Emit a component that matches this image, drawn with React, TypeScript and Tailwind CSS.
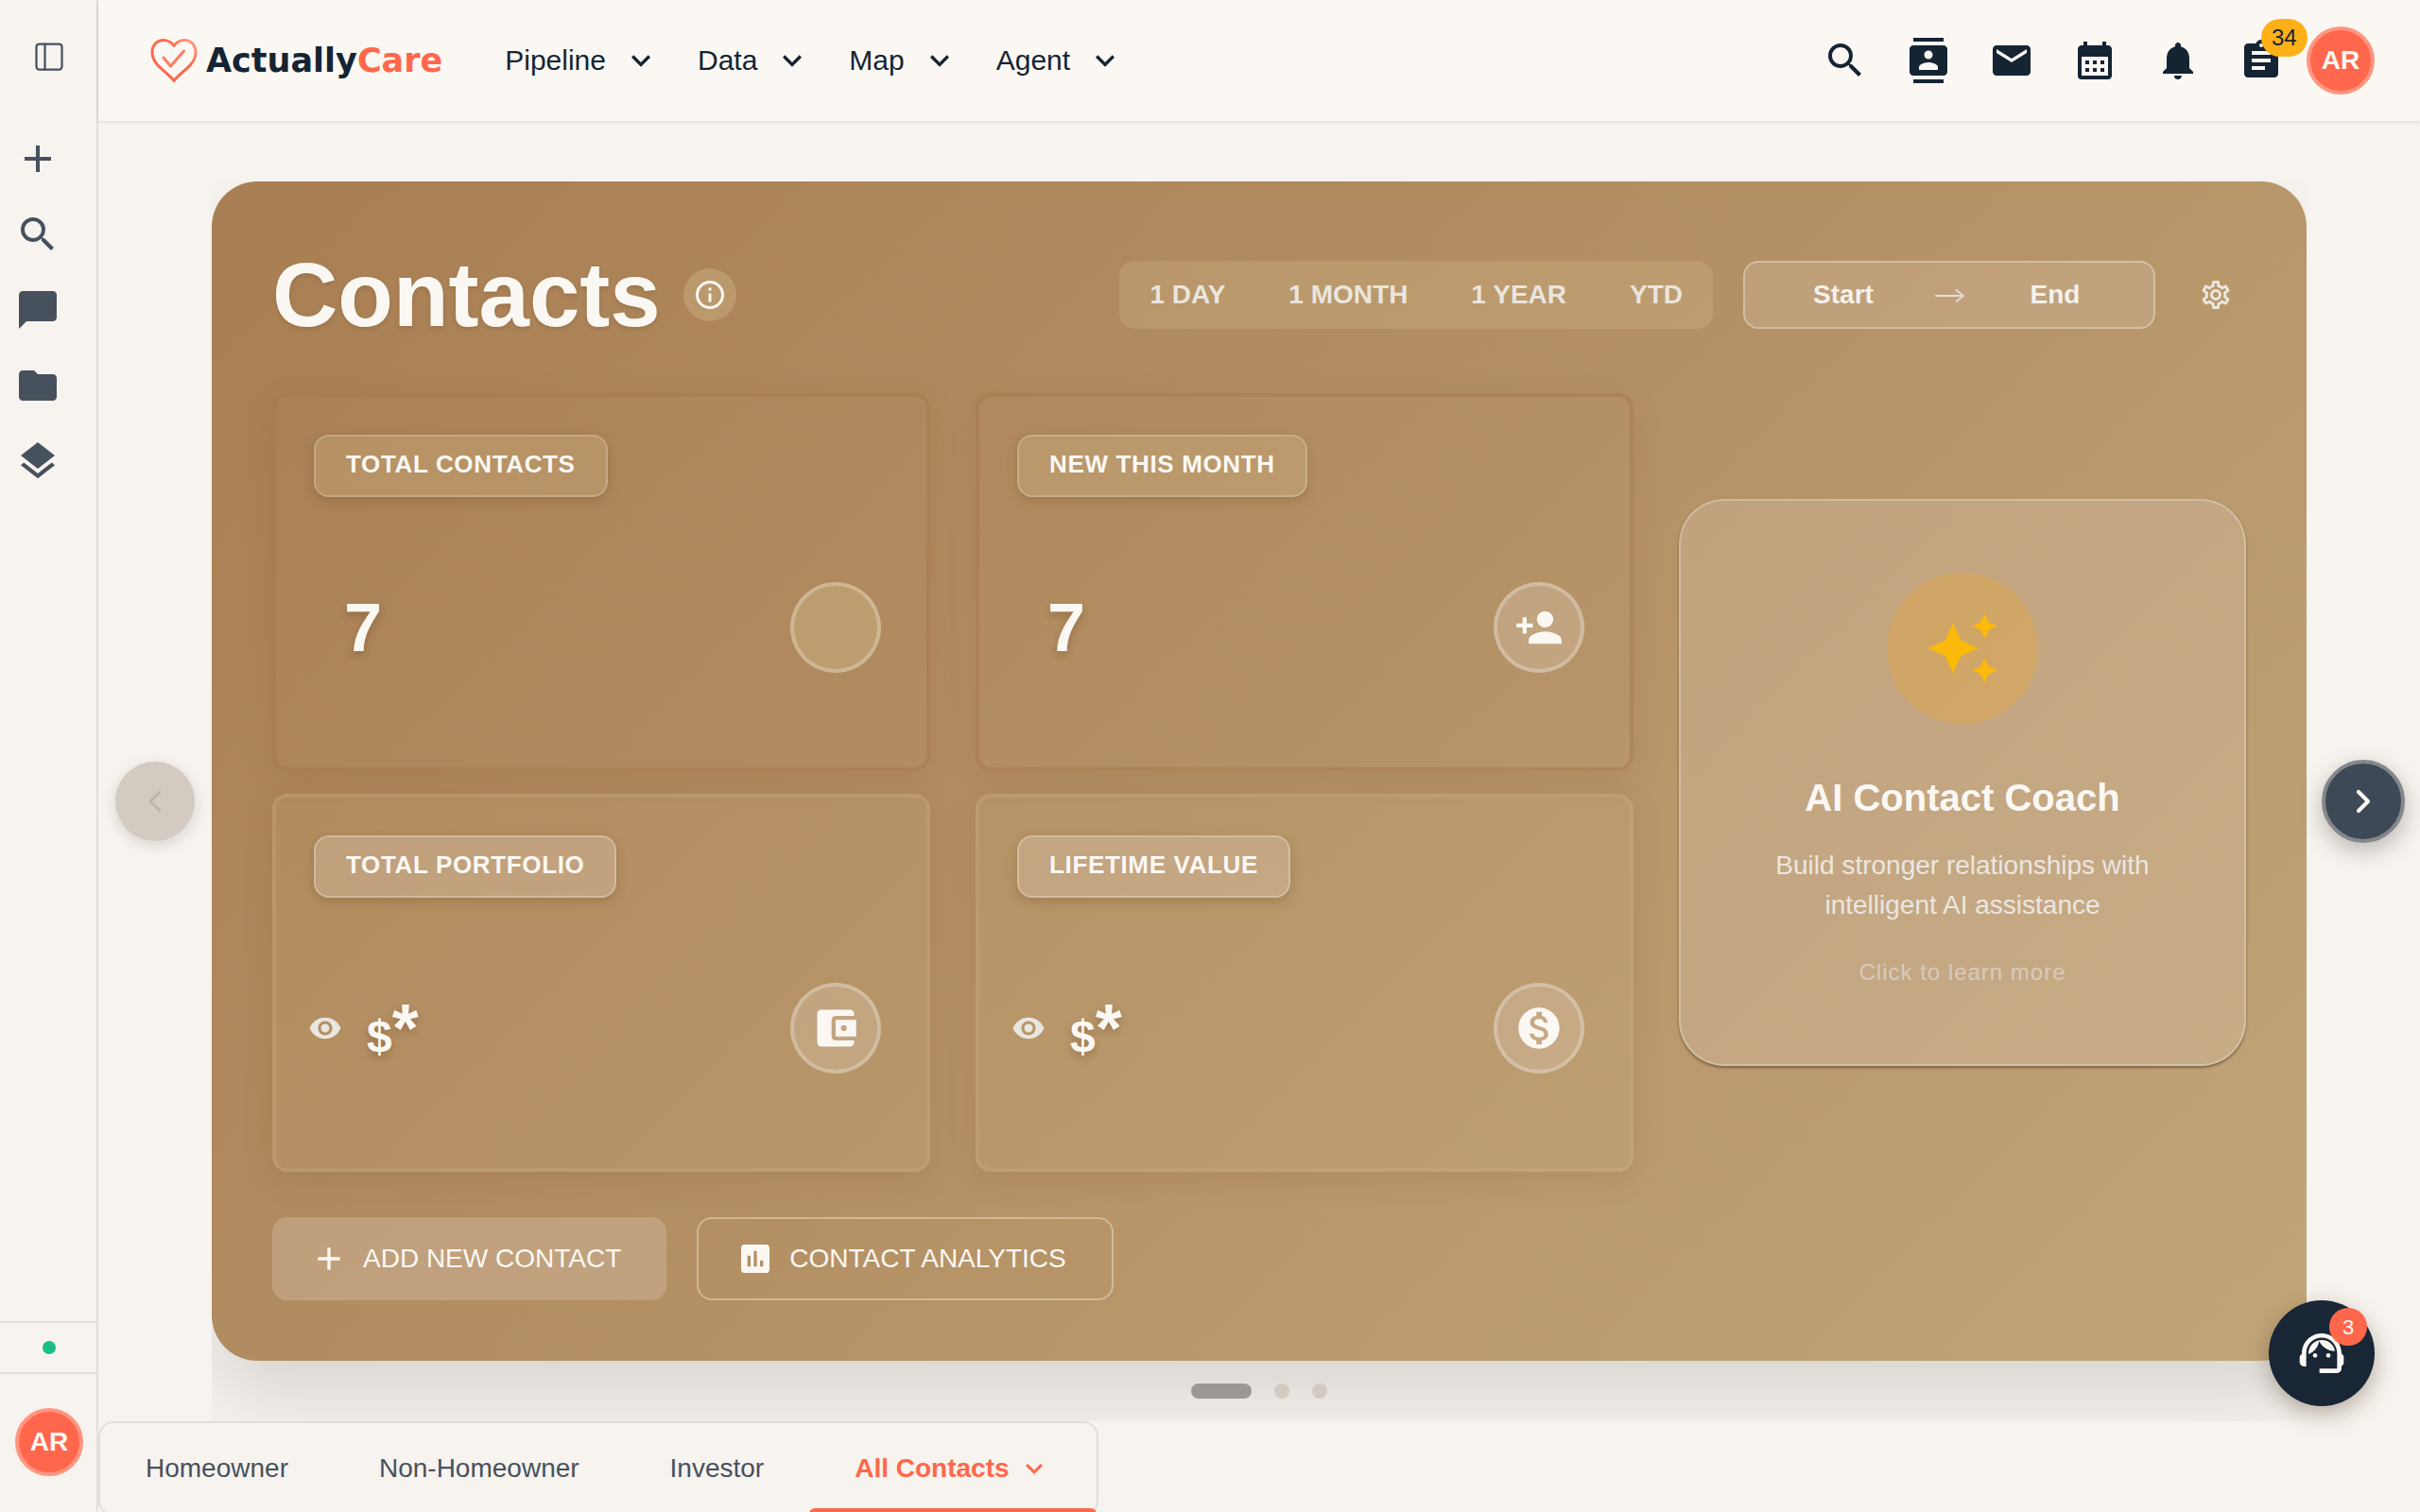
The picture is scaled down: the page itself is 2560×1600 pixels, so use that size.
import type { ReactNode } from "react";
import { ChevronLeft, ChevronRight, PanelLeft } from "lucide-react";
import {
  MdAccountBalanceWallet,
  MdAdd,
  MdAssessment,
  MdAssignment,
  MdAutoAwesome,
  MdCalendarMonth,
  MdChatBubble,
  MdContacts,
  MdEmail,
  MdFolder,
  MdInfoOutline,
  MdKeyboardArrowDown,
  MdLayers,
  MdMonetizationOn,
  MdNotifications,
  MdOutlineSettings,
  MdPersonAdd,
  MdSearch,
  MdSupportAgent,
  MdVisibility,
} from "react-icons/md";

const sideItems = [
  { label: "Add", icon: MdAdd },
  { label: "Search", icon: MdSearch },
  { label: "Chat", icon: MdChatBubble },
  { label: "Files", icon: MdFolder },
  { label: "Layers", icon: MdLayers },
];

const navItems = ["Pipeline", "Data", "Map", "Agent"];

const headerActions = [
  { label: "Search", icon: MdSearch },
  { label: "Contacts", icon: MdContacts },
  { label: "Email", icon: MdEmail },
  { label: "Calendar", icon: MdCalendarMonth },
  { label: "Notifications", icon: MdNotifications },
  { label: "Tasks", icon: MdAssignment, badge: "34" },
];

const ranges = ["1 DAY", "1 MONTH", "1 YEAR", "YTD"];
const tabs = ["Homeowner", "Non-Homeowner", "Investor"];

function Avatar() {
  return (
    <button
      type="button"
      aria-label="Account"
      className="flex size-18 shrink-0 items-center justify-center rounded-full border-4 border-[#ff9580] bg-[#ff674c] text-[28px] font-bold leading-none text-[#fbf8f3]"
    >
      AR
    </button>
  );
}

function Logo() {
  return (
    <a href="#home" className="flex items-center gap-1.5" aria-label="ActuallyCare">
      <svg viewBox="0 0 56 56" className="size-14" fill="none" strokeLinecap="round" strokeLinejoin="round">
        <defs>
          <linearGradient id="heart" x1="0" y1="1" x2="1" y2="0">
            <stop offset="0.6" stopColor="#ff674c" />
            <stop offset="1" stopColor="#ff9f8c" />
          </linearGradient>
        </defs>
        <path
          d="M28 49.5C21 40 5 33 5 19.5C5 11.500 10 6.500 17 6.500C21.500 6.500 25.500 9 28 12.500C30.500 9 34.500 6.500 39 6.500C46 6.500 51 11.500 51 19.500C51 33 35 40 28 49.500Z"
          stroke="url(#heart)"
          strokeWidth="3"
        />
        <path d="M17 25L24.500 34L38.500 18" stroke="#ff7a62" strokeWidth="3" />
      </svg>
      <span className="font-['DejaVu_Sans'] text-[35px] font-bold leading-none text-[#152433]">
        Actually<span className="text-[#ff674c]">Care</span>
      </span>
    </a>
  );
}

function Sidebar() {
  return (
    <aside className="flex w-26 shrink-0 flex-col border-r-2 border-[#e2dfda] pl-0.5 text-[#47515e]">
      <button type="button" aria-label="Toggle sidebar" className="mt-9 flex h-12 items-center justify-center">
        <PanelLeft size={36} strokeWidth={1.5} />
      </button>
      <nav className="mt-15 flex flex-1 flex-col gap-8 pl-3.5">
        {sideItems.map(({ label, icon: Icon }) => (
          <button key={label} type="button" aria-label={label} className="size-12">
            <Icon size={48} />
          </button>
        ))}
      </nav>
      <div className="-ml-0.5 flex h-14 items-center justify-center border-y-2 border-[#e2dfda] pl-0.5">
        <span className="size-3.5 rounded-full bg-[#1bbd85]" />
      </div>
      <div className="flex justify-center pb-[38px] pt-9">
        <Avatar />
      </div>
    </aside>
  );
}

function Header() {
  return (
    <header className="relative z-10 flex h-32 shrink-0 items-center justify-between bg-[#fbf8f3] pl-13 pr-12 text-[#152433] shadow-[0_1px_4px_rgba(0,0,0,0.12)]">
      <div className="flex items-center gap-[66px]">
        <Logo />
        <nav className="flex items-center gap-10">
          {navItems.map((item) => (
            <button key={item} type="button" className="flex items-center gap-[17px] text-[30px] leading-10">
              {item}
              <MdKeyboardArrowDown size={40} />
            </button>
          ))}
        </nav>
      </div>
      <div className="flex items-center gap-2">
        {headerActions.map(({ label, icon: Icon, badge }) => (
          <button key={label} type="button" aria-label={label} className="relative flex size-20 items-center justify-center">
            <Icon size={48} />
            {badge && (
              <span className="absolute -top-1 left-10 flex h-10 items-center justify-center rounded-full bg-[#fdb017] px-[11px] text-2xl">
                {badge}
              </span>
            )}
          </button>
        ))}
        <Avatar />
      </div>
    </header>
  );
}

function StatCard({
  label,
  value,
  icon,
  tone,
}: {
  label: string;
  value?: string;
  icon?: ReactNode;
  tone: "dark" | "light";
}) {
  return (
    <section
      className={
        tone === "dark"
          ? "flex h-100 flex-col items-start rounded-2xl border-4 border-[#a4784a]/50 p-10 shadow-[0_8px_32px_rgba(120,70,30,0.12)]"
          : "flex h-100 flex-col items-start rounded-2xl border-4 border-[#d0b487]/25 bg-[#d8c090]/10 p-10 shadow-[0_8px_32px_rgba(120,70,30,0.14)]"
      }
    >
      <h2
        className={
          tone === "dark"
            ? "rounded-2xl border-2 border-white/20 bg-[#d8c090]/25 px-8 pb-4 pt-3 text-[26px] font-bold leading-[34px] tracking-wide text-[#fbf8f3] shadow-[0_4px_12px_rgba(100,60,20,0.25)]"
            : "rounded-2xl border-2 border-white/25 bg-[#d8bfa8]/40 px-8 pb-4 pt-3 text-[26px] font-bold leading-[34px] tracking-wide text-[#fbf8f3] shadow-[0_4px_12px_rgba(100,60,20,0.25)]"
        }
      >
        {label}
      </h2>
      <div className="mt-[30px] flex w-full flex-1 items-center justify-between pr-2 text-[#fbf8f3]">
        {value ? (
          <p className="pl-8 text-7xl font-bold leading-none [text-shadow:0_4px_8px_rgba(90,50,20,0.3)]">{value}</p>
        ) : (
          <div className="flex items-center gap-5">
            <button type="button" aria-label={`Show ${label}`} className="-ml-3 flex size-12 items-center justify-center text-[#e9e5df]">
              <MdVisibility size={36} />
            </button>
            <p className="flex items-baseline text-7xl font-bold leading-none [text-shadow:0_4px_8px_rgba(90,50,20,0.3)]">
              <span className="text-5xl leading-none">$</span>
              <span>*</span>
            </p>
          </div>
        )}
        <span
          className={
            tone === "dark" && !icon
              ? "flex size-24 items-center justify-center rounded-full border-4 border-white/25 bg-[#d8c090]/35"
              : "flex size-24 items-center justify-center rounded-full border-4 border-white/25 bg-[#d8bfa8]/40"
          }
        >
          {icon}
        </span>
      </div>
    </section>
  );
}

function DateField({ label }: { label: string }) {
  return (
    <input
      aria-label={label}
      placeholder={label}
      className="w-45 bg-transparent text-center text-[28px] font-bold text-[#f5f1ec] outline-none placeholder:text-[#f5f1ec] placeholder:opacity-100"
    />
  );
}

function ContactsPanel() {
  return (
    <div className="rounded-[48px] bg-linear-135 from-[#a87e52] via-[#b49165] to-[#c2a679] p-16 shadow-[0_40px_80px_rgba(0,0,0,0.12)]">
      <div className="flex h-28 items-center justify-between">
        <div className="flex items-center gap-6">
          <h1 className="text-8xl font-bold leading-[112px] text-[#fbf8f3] [text-shadow:0_2px_4px_rgba(90,50,20,0.2)]">Contacts</h1>
          <button type="button" aria-label="Info" className="flex size-14 items-center justify-center rounded-full bg-[#d8c090]/35 text-[#fbf8f3]">
            <MdInfoOutline size={36} />
          </button>
        </div>
        <div className="flex items-center gap-8">
          <div className="flex h-18 items-center gap-[3px] rounded-2xl bg-[#d8c090]/25">
            {ranges.map((range) => (
              <button key={range} type="button" className="h-full px-8 text-[28px] font-bold text-[#eae5de]">
                {range}
              </button>
            ))}
          </div>
          <div className="flex h-18 items-center rounded-2xl border-2 border-white/30 bg-[#d8bfa8]/30 px-3.5">
            <DateField label="Start" />
            <svg viewBox="0 0 44 32" className="h-8 w-11" fill="none" stroke="#e3dcd4" strokeWidth="2">
              <path d="M7 17H37M29 10.500L37 17L29 23.500" />
            </svg>
            <DateField label="End" />
          </div>
          <button type="button" aria-label="Settings" className="flex size-16 items-center justify-center text-[#eae5de]">
            <MdOutlineSettings size={36} />
          </button>
        </div>
      </div>

      <div className="mt-12 flex items-center gap-12">
        <div className="grid flex-1 grid-cols-2 gap-x-12 gap-y-6">
          <StatCard label="TOTAL CONTACTS" value="7" tone="dark" />
          <StatCard label="NEW THIS MONTH" value="7" tone="dark" icon={<MdPersonAdd size={52} />} />
          <StatCard label="TOTAL PORTFOLIO" tone="light" icon={<MdAccountBalanceWallet size={52} />} />
          <StatCard label="LIFETIME VALUE" tone="light" icon={<MdMonetizationOn size={52} />} />
        </div>
        <button
          type="button"
          className="flex size-150 flex-col items-center justify-center rounded-[48px] border-2 border-white/25 bg-[#d8bfa8]/35 pb-1.5 shadow-[0_2px_3px_rgba(60,40,20,0.5)]"
        >
          <span className="flex size-40 items-center justify-center rounded-full bg-[#f8a91c]/25 text-[#fbb90b]">
            <MdAutoAwesome size={80} />
          </span>
          <span className="mt-[54px] text-[40px] font-bold leading-12 text-[#fbf8f3]">AI Contact Coach</span>
          <span className="mt-[27px] w-110 text-[28px] leading-[42px] text-[#ebe6e0]">
            Build stronger relationships with intelligent AI assistance
          </span>
          <span className="mt-[34px] text-2xl leading-8 tracking-[1px] text-[#d8cbbd]">Click to learn more</span>
        </button>
      </div>

      <div className="mt-12 flex gap-8 text-[28px] text-[#fbf8f3]">
        <button type="button" className="flex h-22 items-center gap-4 rounded-2xl bg-[#d8bfa8]/40 pl-10 pr-12">
          <MdAdd size={40} />
          ADD NEW CONTACT
        </button>
        <button type="button" className="flex h-22 items-center gap-4 rounded-2xl border-2 border-white/35 pl-10 pr-12">
          <MdAssessment size={40} />
          CONTACT ANALYTICS
        </button>
      </div>
    </div>
  );
}

export default function App() {
  return (
    <div className="flex h-screen overflow-hidden bg-[#f7f3ee] font-['Liberation_Sans',Arial,sans-serif]">
      <Sidebar />
      <div className="flex min-w-0 flex-1 flex-col">
        <Header />
        <main className="pt-16">
          <div className="flex items-center gap-4 px-4">
            <button
              type="button"
              disabled
              aria-label="Previous"
              className="mx-0.5 flex size-21 shrink-0 items-center justify-center rounded-full bg-[#d3cac2] text-[#bfb2a7] shadow-[0_4px_16px_rgba(0,0,0,0.14)]"
            >
              <ChevronLeft size={40} strokeWidth={1.5} />
            </button>
            <div className="min-w-0 flex-1 overflow-hidden">
              <ContactsPanel />
              <div className="relative flex justify-center gap-6 py-6">
                <span className="h-4 w-16 rounded-full bg-[#9a9896]" />
                <span className="size-4 rounded-full bg-[#d3cac2]" />
                <span className="size-4 rounded-full bg-[#d3cac2]" />
              </div>
            </div>
            <button
              type="button"
              aria-label="Next"
              className="flex size-22 shrink-0 items-center justify-center rounded-full border-4 border-[#85878a] bg-[#3e4957] text-[#fbf8f3] shadow-[0_8px_24px_rgba(0,0,0,0.25)]"
            >
              <ChevronRight size={40} strokeWidth={2.5} />
            </button>
          </div>
          <div role="tablist" className="flex w-fit rounded-2xl border-2 border-[#e2dfda] text-[28px] text-[#47515e]">
            {tabs.map((tab) => (
              <button key={tab} type="button" role="tab" aria-selected="false" className="h-24 px-12">
                {tab}
              </button>
            ))}
            <button
              type="button"
              role="tab"
              aria-selected="true"
              className="relative flex h-24 items-center gap-2 px-12 font-bold text-[#ff674c]"
            >
              All Contacts
              <MdKeyboardArrowDown size={36} />
              <span className="absolute inset-x-0 bottom-0 h-1.5 rounded-t-lg bg-[#ff674c]" />
            </button>
          </div>
        </main>
      </div>
      <button
        type="button"
        aria-label="Support"
        className="fixed bottom-28 right-12 flex size-28 items-center justify-center rounded-full bg-[#182635] text-[#fbf8f3] shadow-[0_8px_24px_rgba(60,40,20,0.35)]"
      >
        <MdSupportAgent size={56} />
        <span className="absolute right-2 top-2 flex size-10 items-center justify-center rounded-full bg-[#ff674c] text-[22px]">3</span>
      </button>
    </div>
  );
}
